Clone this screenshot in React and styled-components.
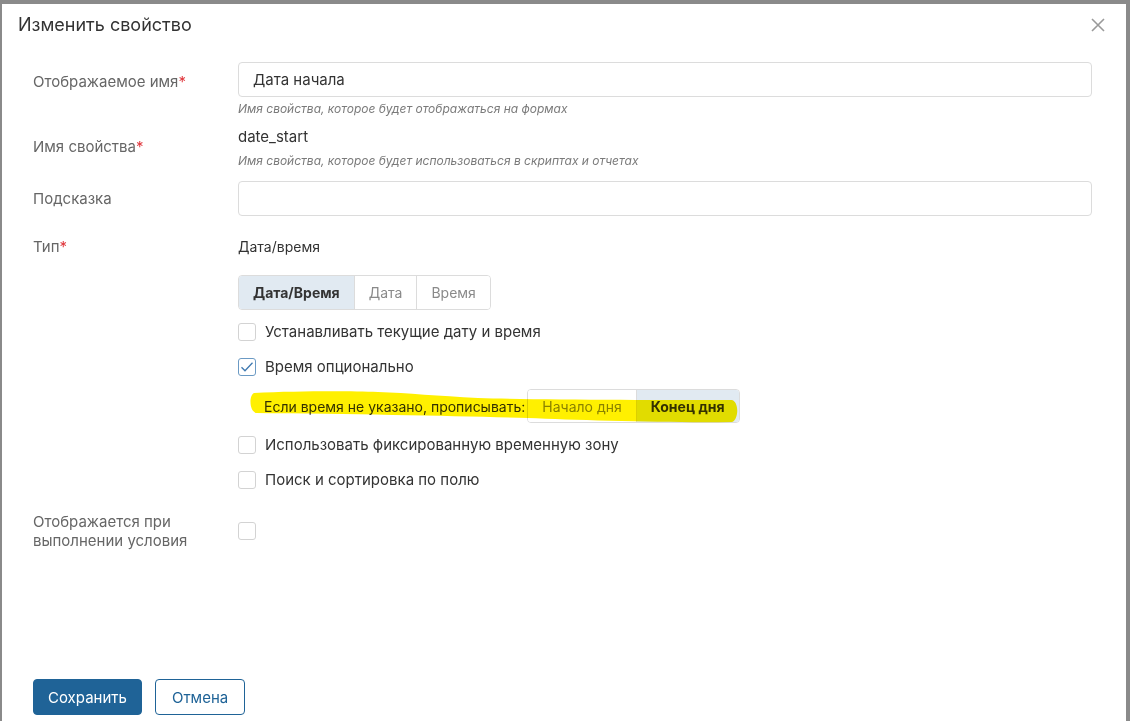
import React from "react";
import styled, { createGlobalStyle } from "styled-components";

const Global = createGlobalStyle`
  html, body { margin: 0; padding: 0; }
  body {
    background: #8a8a8a;
    font-family: Inter, "Noto Sans", Roboto, sans-serif;
    color: #333;
    overflow: hidden;
  }
  * { box-sizing: border-box; }
`;

const Screen = styled.div`
  height: 100vh;
  padding: 4px 4px 0 2px;
  display: flex;
`;

const Modal = styled.div`
  flex: 1;
  background: #fff;
  display: flex;
  flex-direction: column;
`;

const Header = styled.div`
  display: flex;
  align-items: center;
  justify-content: space-between;
  padding: 10px 20px 10px 16px;
`;

const Title = styled.h2`
  margin: 0;
  font-size: 18px;
  line-height: 22px;
  font-weight: 400;
  color: #333;
`;

const Close = styled.button`
  border: 0;
  background: none;
  padding: 0;
  width: 16px;
  height: 16px;
  display: flex;
  align-items: center;
  justify-content: center;
  cursor: pointer;
`;

const Body = styled.div`
  flex: 1;
  padding: 16px 34px 0 31px;
  display: flex;
  flex-direction: column;
`;

const Field = styled.div`
  display: grid;
  grid-template-columns: 205px 1fr;
  margin-top: ${(p) => p.$gap || 0}px;
`;

const Label = styled.div`
  padding-top: ${(p) => p.$pad || 0}px;
  font-size: 15px;
  line-height: ${(p) => p.$lh || 20}px;
  color: #666;
`;

const Req = styled.span`
  color: #e0353b;
`;

const Control = styled.div`
  display: flex;
  flex-direction: column;
  align-items: flex-start;
`;

const Input = styled.input`
  width: 100%;
  height: 35px;
  border: 1px solid #dcdcdc;
  border-radius: 4px;
  padding: 0 14px;
  font: inherit;
  font-size: 15px;
  color: #333;
  outline: none;
`;

const Hint = styled.div`
  margin-top: ${(p) => p.$gap || 4}px;
  font-size: 12px;
  line-height: 16px;
  font-style: italic;
  color: #7a7a7a;
`;

const StaticValue = styled.div`
  font-size: ${(p) => p.$size || 15}px;
  line-height: 20px;
  color: #333;
`;

const Segmented = styled.div`
  display: inline-flex;
  height: ${(p) => p.$h || 35}px;
  border: 1px solid #dcdcdc;
  border-radius: 4px;
  overflow: hidden;
  margin-top: ${(p) => p.$gap || 0}px;
  background: #fff;
`;

const Segment = styled.div`
  display: flex;
  align-items: center;
  padding: 0 ${(p) => p.$px || 14}px;
  font-size: 14px;
  font-weight: ${(p) => (p.$active ? 700 : 400)};
  color: ${(p) => (p.$active ? "#333" : "#8a8a8a")};
  background: ${(p) => (p.$active ? "#e1eaf2" : "#fff")};
  & + & {
    border-left: 1px solid #dcdcdc;
  }
`;

const CheckRow = styled.label`
  display: flex;
  align-items: center;
  gap: 9px;
  margin-top: ${(p) => p.$gap || 0}px;
  font-size: 15px;
  line-height: 18px;
  color: #333;
`;

const Box = styled.span`
  width: 18px;
  height: 18px;
  flex: none;
  border: 1px solid ${(p) => (p.$checked ? "#6b9ac4" : "#d3d3d3")};
  border-radius: 3px;
  background: #fff;
  display: flex;
  align-items: center;
  justify-content: center;
`;

const OptionRow = styled.div`
  position: relative;
  display: flex;
  align-items: center;
  gap: 2px;
  margin-top: ${(p) => p.$gap || 0}px;
  padding-left: 26px;
  font-size: 14px;
  color: #333;
`;

const OptionText = styled.span`
  position: relative;
  z-index: 0;
`;

/* highlighter-pen stroke laid over the option row */
const Marker = styled.svg`
  position: absolute;
  left: 0;
  top: 0;
  width: 510px;
  height: 36px;
  pointer-events: none;
  mix-blend-mode: multiply;
  z-index: 2;
`;

const Footer = styled.div`
  display: flex;
  gap: 13px;
  padding: 0 0 6px 31px;
`;

const Button = styled.button`
  height: 36px;
  padding: 0 ${(p) => (p.$primary ? 14 : 16)}px;
  border-radius: 4px;
  border: 1px solid #1f6397;
  background: ${(p) => (p.$primary ? "#1f6397" : "#fff")};
  color: ${(p) => (p.$primary ? "#fff" : "#1f6397")};
  font: inherit;
  font-size: 15px;
  cursor: pointer;
`;

function Checkbox({ checked, children, gap }) {
  return (
    <CheckRow $gap={gap}>
      <Box $checked={checked}>
        {checked && (
          <svg width="14" height="12" viewBox="0 0 14 12">
            <path d="M1.5 6.2 L5 9.8 L12.5 1.8" fill="none" stroke="#3f79b0" strokeWidth="1.3" />
          </svg>
        )}
      </Box>
      {children}
    </CheckRow>
  );
}

export default function App() {
  return (
    <>
      <Global />
      <Screen>
        <Modal>
          <Header>
            <Title>Изменить свойство</Title>
            <Close aria-label="Закрыть">
              <svg width="14" height="14" viewBox="0 0 14 14">
                <path d="M1 1 L13 13 M13 1 L1 13" stroke="#9a9a9a" strokeWidth="1.6" />
              </svg>
            </Close>
          </Header>

          <Body>
            <Field>
              <Label $pad={10}>
                Отображаемое имя<Req>*</Req>
              </Label>
              <Control>
                <Input defaultValue="Дата начала" />
                <Hint>Имя свойства, которое будет отображаться на формах</Hint>
              </Control>
            </Field>

            <Field $gap={10}>
              <Label $pad={10}>
                Имя свойства<Req>*</Req>
              </Label>
              <Control>
                <StaticValue>date_start</StaticValue>
                <Hint $gap={6}>Имя свойства, которое будет использоваться в скриптах и отчетах</Hint>
              </Control>
            </Field>

            <Field $gap={12}>
              <Label $pad={8}>Подсказка</Label>
              <Control>
                <Input />
              </Control>
            </Field>

            <Field $gap={21}>
              <Label>
                Тип<Req>*</Req>
              </Label>
              <Control>
                <StaticValue $size={14}>Дата/время</StaticValue>
                <Segmented $gap={18}>
                  <Segment $active>Дата/Время</Segment>
                  <Segment>Дата</Segment>
                  <Segment>Время</Segment>
                </Segmented>
                <Checkbox gap={13}>Устанавливать текущие дату и время</Checkbox>
                <Checkbox gap={17} checked>
                  Время опционально
                </Checkbox>
                <OptionRow $gap={13}>
                  <OptionText>Если время не указано, прописывать:</OptionText>
                  <Segmented $h={34}>
                    <Segment $px={14}>Начало дня</Segment>
                    <Segment $px={14} $active>
                      Конец дня
                    </Segment>
                  </Segmented>
                  <Marker viewBox="0 0 510 36">
                    <path
                      d="M16 4 C60 2 110 2 140 3 C170 4 200 7 240 9 C300 11 420 11 494 11 C501 13 501 30 494 33 C430 34 340 31 290 29 C220 27 120 25 18 24 C11 22 11 6 16 4 Z"
                      fill="#fff000"
                    />
                  </Marker>
                </OptionRow>
                <Checkbox gap={13}>Использовать фиксированную временную зону</Checkbox>
                <Checkbox gap={17}>Поиск и сортировка по полю</Checkbox>
              </Control>
            </Field>

            <Field $gap={23}>
              <Label $lh={19}>
                Отображается при
                <br />
                выполнении условия
              </Label>
              <Control>
                <CheckRow $gap={10}>
                  <Box />
                </CheckRow>
              </Control>
            </Field>
          </Body>

          <Footer>
            <Button $primary>Сохранить</Button>
            <Button>Отмена</Button>
          </Footer>
        </Modal>
      </Screen>
    </>
  );
}
